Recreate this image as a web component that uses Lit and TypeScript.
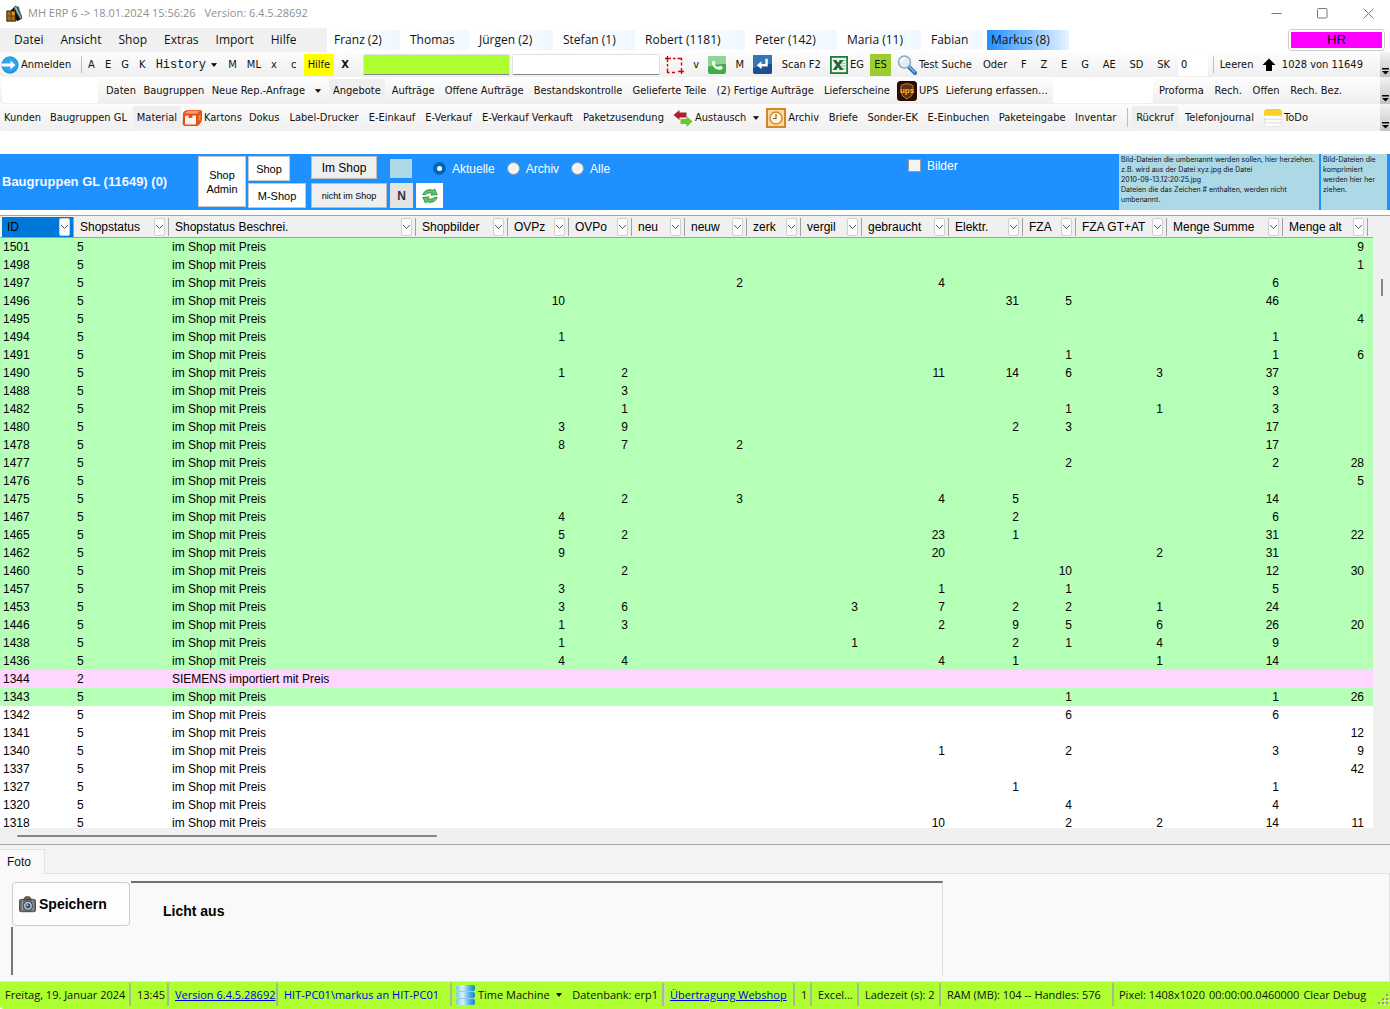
import { LitElement, html, svg, css, nothing, TemplateResult } from "lit";
import { customElement, state } from "lit/decorators.js";
import { classMap } from "lit/directives/class-map.js";

/* ---------- icons ---------- */

const caret = html`<svg class="caret" width="7" height="4" viewBox="0 0 7 4" aria-hidden="true"><path d="M0.5 0.5h5L3 3.5z" fill="#000" stroke="#000" stroke-width="0.6" /></svg>`;

const icon = (size: number, body: TemplateResult | TemplateResult[]) =>
  html`<svg class="ico" width=${size} height=${size} viewBox="0 0 20 20" aria-hidden="true">${body}</svg>`;

const icons = {
  app: icon(17, svg`
    <path d="M5 7 L11 1 L18 12 L19 16 L13 19z" fill="#111" />
    <path d="M11 1l4 1 4 13-2 2L9 5z" fill="#35605e" />
    <path d="M10 3l2-1 6 13-1 1z" fill="#9cb8b4" />
    <rect x="1" y="7" width="10" height="12" fill="#a86e10" stroke="#1b1205" />
    <path d="M1 13h10M6 7v12" stroke="#5d3b04" stroke-width="1" />
    <rect x="7" y="8" width="3" height="4" fill="#d89a2a" />`),
  login: icon(18, svg`
    <circle cx="10" cy="10" r="9.6" fill="#1c8fdc" />
    <circle cx="10" cy="9.6" r="8.2" fill="#2ea5ea" />
    <path d="M0.500 8.400h10V5l5.500 5-5.500 5v-3.400H0.500z" fill="#fff" />`),
  crop: icon(20, svg`
    <g stroke="#d40000" stroke-width="1.4" fill="none">
      <path d="M1 3.500h6M3.500 1v6" />
      <path d="M9 3.500h2.500M13.500 3.500h4v2" />
      <path d="M3.500 9v2.500M3.500 13.500v4h2M17.500 7.500v3M8 17.500h3M17.500 13v6M14 16.500h6" />
    </g>`),
  phone: icon(18, svg`
    <rect width="20" height="20" rx="2.500" fill="#3fae49" />
    <path d="M0 2.500Q0 0 2.500 0h15Q20 0 20 2.500V9Q10 8 0 12z" fill="#8fd695" />
    <path d="M4.500 6.500Q6 4.500 7.500 6l.8 2.200L7.200 9.800Q9.500 12.500 11.800 12l1.600-1.300 2.600 1.200q1.200 1.500-.8 3-6 1.600-9.500-3.400-2-2.800-1.200-5z" fill="#fff" />`),
  enter: icon(19, svg`
    <rect width="20" height="20" rx="1.500" fill="#1a4f8f" />
    <path d="M0 1.500Q0 0 1.500 0h17Q20 0 20 1.500V9Q10 10 0 14z" fill="#3577b5" />
    <path d="M15.500 4v8.200H9V15l-5-4.200 5-4.300v3h4V4z" fill="#fff" />`),
  excel: icon(18, svg`
    <rect x="1" y="1" width="18" height="18" fill="#eef5ee" stroke="#217a3c" stroke-width="2" />
    <path d="M12 5h5M12 8h5M12 11h5M12 14h5" stroke="#7db58a" />
    <path d="M3 4.500h4l2 3 2-3h4L11 10l4 5.500h-4l-2-3-2 3H3L7 10z" fill="#1d6b33" />`),
  search: icon(20, svg`
    <path d="M12 12l6 6" stroke="#2e75b8" stroke-width="4" stroke-linecap="round" />
    <path d="M12.500 12l5 5" stroke="#8cbde6" stroke-width="1.200" stroke-linecap="round" />
    <circle cx="7.500" cy="7" r="6" fill="#dceefb" stroke="#93a9c4" stroke-width="1.600" />
    <path d="M4 6.500a3.800 3.800 0 0 1 4-3" stroke="#fff" stroke-width="1.800" fill="none" />`),
  up: html`<svg class="ico" width="14" height="14" viewBox="0 0 14 14" aria-hidden="true"><path d="M7 0.500l6.500 6.500H10v6H4V7H0.500z" fill="#000" /></svg>`,
  ups: icon(20, svg`
    <rect width="20" height="20" rx="3.500" fill="#2c0b04" />
    <path d="M4 4.500Q10 1 16 4.500V11q0 4-6 7-6-3-6-7z" fill="#5e2f10" stroke="#c98a3a" stroke-width="0.900" />
    <text x="10" y="12" text-anchor="middle" font-family="Liberation Sans, sans-serif" font-weight="700" font-size="8" fill="#f5b63f">ups</text>`),
  box: icon(20, svg`
    <path d="M1 5.500Q2 2 6 2h12q2 0 2 2v7q0 3-3 6l-1.500 1H3Q1 18 0.700 16z" fill="#e8500f" />
    <path d="M2 5.500L6 2.800h12l-3 3z" fill="#f79b75" />
    <rect x="3" y="7.500" width="11" height="9" rx="1" fill="#fff4ee" />
    <path d="M6.500 7h4v3h-4z" fill="#e8500f" />
    <path d="M16.500 8l2-2.500v5.500l-2 2.500z" fill="#f58256" />`),
  swap: icon(20, svg`
    <path d="M0.500 7L6.500 2v2.500h7v5h-7V12z" fill="#b0202a" />
    <path d="M19.500 13.500L13.500 8v3h-6v5h6v3z" fill="#6cc42f" />`),
  clock: icon(20, svg`
    <rect x="1" y="1" width="18" height="18" fill="#fbdc9c" stroke="#d0872b" stroke-width="2" />
    <circle cx="10" cy="10" r="6" fill="#fff6dd" stroke="#cf8a34" stroke-width="1.500" />
    <path d="M10 6v4.500H7" stroke="#8c5a18" fill="none" stroke-width="1.200" />`),
  note: icon(18, svg`
    <rect x="0.500" y="0.500" width="19" height="19" rx="3" fill="#fdfdfd" stroke="#e4e4e4" />
    <path d="M0 7.500V4Q0 0 4 0h12q4 0 4 4v3.500z" fill="#f9cf2a" />
    <path d="M0.500 11.500h19M0.500 15.500h19" stroke="#d9d9d9" />`),
  refresh: icon(18, svg`
    <g fill="#5cc860" stroke="#1c8a35" stroke-width="0.900" stroke-linejoin="round">
      <path d="M2 8.500Q4 3 10 3q2 0 3.500.8L15 2l3 6.500-7 .5 1.500-2Q7.500 5.500 5 8.500z" />
      <path d="M18 11.500Q16 17 10 17q-2 0-3.500-.8L5 18l-3-6.500 7-.5-1.500 2q5 1.500 7.500-1.500z" />
    </g>`),
  camera: icon(17, svg`
    <path d="M5.500 4l2-3h5l2 3z" fill="#777" stroke="#333" />
    <rect x="0.500" y="4" width="19" height="14.500" rx="2" fill="#6d6d6d" stroke="#3b3b3b" />
    <path d="M4 5v13M16.500 5v13" stroke="#a5a5a5" />
    <circle cx="10.500" cy="11.500" r="5.200" fill="#c9ced3" stroke="#333" />
    <circle cx="10.500" cy="11.500" r="3" fill="#27507f" />
    <circle cx="9.800" cy="10.800" r="1.200" fill="#a9d2f5" />`),
  database: html`<svg class="ico" width="19" height="20" viewBox="0 0 19 20" aria-hidden="true">
    <defs><linearGradient id="drum"><stop offset="0" stop-color="#7cc8ee" /><stop offset="0.350" stop-color="#d8f2fc" /><stop offset="0.700" stop-color="#4fb4ea" /><stop offset="1" stop-color="#1c7ec8" /></linearGradient></defs>
    <g fill="url(#drum)"><rect width="19" height="6" rx="2" /><rect y="7" width="19" height="6" rx="2" /><rect y="14" width="19" height="6" rx="2" /></g>
    <path d="M1 6.500h17M1 13.500h17" stroke="#8fcdec" /></svg>`,
};

/* ---------- data ---------- */

const users: [string, number?][] = [
  ["Franz", 2], ["Thomas"], ["Jürgen", 2], ["Stefan", 1], ["Robert", 1181],
  ["Peter", 142], ["Maria", 11], ["Fabian"], ["Markus", 8],
];

interface Column { key: string; label: string; width: number; text?: boolean }

const columns: Column[] = [
  { key: "id", label: "ID", width: 74, text: true },
  { key: "st", label: "Shopstatus", width: 95, text: true },
  { key: "tx", label: "Shopstatus Beschrei.", width: 247, text: true },
  { key: "bi", label: "Shopbilder", width: 92 },
  { key: "z", label: "OVPz", width: 61 },
  { key: "o", label: "OVPo", width: 63 },
  { key: "n", label: "neu", width: 53 },
  { key: "w", label: "neuw", width: 62 },
  { key: "k", label: "zerk", width: 54 },
  { key: "v", label: "vergil", width: 61 },
  { key: "g", label: "gebraucht", width: 87 },
  { key: "e", label: "Elektr.", width: 74 },
  { key: "f", label: "FZA", width: 53 },
  { key: "t", label: "FZA GT+AT", width: 91 },
  { key: "s", label: "Menge Summe", width: 116 },
  { key: "a", label: "Menge alt", width: 85 },
];

type Row = Record<string, number | string>;
const SHOP = { st: 5, tx: "im Shop mit Preis", tone: "green" };
const PLAIN = { ...SHOP, tone: "plain" };

const rows: Row[] = [
  { id: 1501, ...SHOP, a: 9 },
  { id: 1498, ...SHOP, a: 1 },
  { id: 1497, ...SHOP, w: 2, g: 4, s: 6 },
  { id: 1496, ...SHOP, z: 10, e: 31, f: 5, s: 46 },
  { id: 1495, ...SHOP, a: 4 },
  { id: 1494, ...SHOP, z: 1, s: 1 },
  { id: 1491, ...SHOP, f: 1, s: 1, a: 6 },
  { id: 1490, ...SHOP, z: 1, o: 2, g: 11, e: 14, f: 6, t: 3, s: 37 },
  { id: 1488, ...SHOP, o: 3, s: 3 },
  { id: 1482, ...SHOP, o: 1, f: 1, t: 1, s: 3 },
  { id: 1480, ...SHOP, z: 3, o: 9, e: 2, f: 3, s: 17 },
  { id: 1478, ...SHOP, z: 8, o: 7, w: 2, s: 17 },
  { id: 1477, ...SHOP, f: 2, s: 2, a: 28 },
  { id: 1476, ...SHOP, a: 5 },
  { id: 1475, ...SHOP, o: 2, w: 3, g: 4, e: 5, s: 14 },
  { id: 1467, ...SHOP, z: 4, e: 2, s: 6 },
  { id: 1465, ...SHOP, z: 5, o: 2, g: 23, e: 1, s: 31, a: 22 },
  { id: 1462, ...SHOP, z: 9, g: 20, t: 2, s: 31 },
  { id: 1460, ...SHOP, o: 2, f: 10, s: 12, a: 30 },
  { id: 1457, ...SHOP, z: 3, g: 1, f: 1, s: 5 },
  { id: 1453, ...SHOP, z: 3, o: 6, v: 3, g: 7, e: 2, f: 2, t: 1, s: 24 },
  { id: 1446, ...SHOP, z: 1, o: 3, g: 2, e: 9, f: 5, t: 6, s: 26, a: 20 },
  { id: 1438, ...SHOP, z: 1, v: 1, e: 2, f: 1, t: 4, s: 9 },
  { id: 1436, ...SHOP, z: 4, o: 4, g: 4, e: 1, t: 1, s: 14 },
  { id: 1344, st: 2, tx: "SIEMENS importiert mit Preis", tone: "pink" },
  { id: 1343, ...SHOP, f: 1, s: 1, a: 26 },
  { id: 1342, ...PLAIN, f: 6, s: 6 },
  { id: 1341, ...PLAIN, a: 12 },
  { id: 1340, ...PLAIN, g: 1, f: 2, s: 3, a: 9 },
  { id: 1337, ...PLAIN, a: 42 },
  { id: 1327, ...PLAIN, e: 1, s: 1 },
  { id: 1320, ...PLAIN, f: 4, s: 4 },
  { id: 1318, ...PLAIN, g: 10, f: 2, t: 2, s: 14, a: 11 },
];

/* ---------- tool bars ---------- */

@customElement("tool-bars")
export class ToolBars extends LitElement {
  static styles = css`
    :host { display: block; font: 11px/14px "DejaVu Sans Condensed", "DejaVu Sans", sans-serif; color: #111; }
    .bar { display: grid; background: linear-gradient(#fdfdfd, #efefef); height: 27px; border-bottom-left-radius: 3px; overflow: hidden; }
    .first { grid-template-columns: 82px 273px 7px 149px 150px 2px 309px 204px 34px 156px 1fr 10px; height: 25px; }
    .second { grid-template-columns: 100px 228px 723px 104px 190px 1fr 10px; }
    .third { grid-template-columns: 181px 486px 459px 185px 1fr 10px; }
    .group { display: flex; align-items: center; justify-content: space-between; min-width: 0; padding-left: 1px; }
    .rule { align-self: stretch; border-left: 1px solid #bdbdbd; margin: 4px 0; }
    .inset { padding: 0 3px; }
    .flags { padding: 0 3px 0 8px; }
    button { display: flex; align-items: center; gap: 2px; font: inherit; color: inherit; background: none; border: 0; padding: 0 3px; height: 100%; white-space: nowrap; }
    .icon-only { padding: 0; }
    .mono { font: 12px/14px "Liberation Mono", monospace; gap: 5px; }
    .split { gap: 10px; }
    .help { background: #ff0; height: 22px; padding: 0 4px; }
    .es { background: #9acd32; height: 22px; padding: 0 4px; }
    .strong { font-weight: 700; }
    .lit { background: #efefef; height: 23px; padding: 0 4px; }
    .ico, .caret { flex: none; display: block; }
    input { font: inherit; min-width: 0; box-sizing: border-box; border: 1px solid #e2e2e2; border-bottom: 1px solid #858585; border-radius: 2px; background: #fff; padding: 0 3px; margin: 2px 1px; }
    .scan { background: #adff2f; }
    .bare { border: 0; margin: 1px 2px; }
    .more { grid-column: -2; align-self: stretch; justify-content: center; align-items: flex-end; padding: 0 0 2px; background: linear-gradient(#f2f2f2, #c4c4c4); }
  `;

  private item(label: string, cls = "", ico?: unknown, drop = false) {
    return html`<button class=${cls}>${ico ?? nothing}${label}${drop ? caret : nothing}</button>`;
  }

  private more() {
    return html`<button class="more" aria-label="Weitere"><svg width="7" height="7" viewBox="0 0 7 7"><path d="M0 0h7v1.500H0z" fill="#000" /><path d="M0 3h7L3.500 6.500z" fill="#000" /></svg></button>`;
  }

  render() {
    const i = this.item;
    return html`
      <div class="bar first">
        <div class="group"><button class="icon-only">${icons.login}Anmelden</button><span class="rule"></span></div>
        <div class="group inset">
          ${["A", "E", "G", "K"].map((t) => i(t))}
          ${i("History", "mono", undefined, true)}
          ${i("M")}${i("ML")}${i("x")}<span></span>${i("c")}
          ${i("Hilfe", "help")}${i("X", "strong")}
        </div>
        <span></span>
        <input class="scan" aria-label="Scanfeld" />
        <input aria-label="Suchfeld" />
        <span></span>
        <div class="group">
          <button class="icon-only" aria-label="Ausschnitt">${icons.crop}</button>
          ${i("v")}
          <button class="icon-only" aria-label="Anrufen">${icons.phone}</button>
          ${i("M")}
          <button class="icon-only" aria-label="Eingabe">${icons.enter}</button>
          ${i("Scan F2")}
          ${i("EG", "icon-only", icons.excel)}
          ${i("ES", "es")}
          ${i("Test Suche", "icon-only", icons.search)}
        </div>
        <div class="group flags">${["Oder", "F", "Z", "E", "G", "AE", "SD", "SK"].map((t) => i(t))}</div>
        <input class="bare" aria-label="Anzahl" value="0" />
        <div class="group inset"><span class="rule"></span>${i("Leeren")}<button aria-label="Nach oben">${icons.up}</button>${i("1028 von 11649", "icon-only")}</div>
        ${this.more()}
      </div>

      <div class="bar second">
        <input class="bare" aria-label="Filter" />
        <div class="group inset">${i("Daten")}${i("Baugruppen")}${i("Neue Rep.-Anfrage", "split", undefined, true)}</div>
        <div class="group">
          ${i("Angebote", "lit")}${i("Aufträge")}${i("Offene Aufträge")}${i("Bestandskontrolle")}
          ${i("Gelieferte Teile")}${i("(2) Fertige Aufträge")}${i("Lieferscheine")}
          ${i("UPS", "icon-only", icons.ups)}${i("Lieferung erfassen…")}
        </div>
        <input class="bare" aria-label="Rechnungsfilter" />
        <div class="group">${i("Proforma")}${i("Rech.")}${i("Offen")}${i("Rech. Bez.")}</div>
        ${this.more()}
      </div>

      <div class="bar third">
        <div class="group">${i("Kunden")}${i("Baugruppen GL")}${i("Material", "lit")}</div>
        <div class="group">
          ${i("Kartons", "icon-only", icons.box)}${i("Dokus")}${i("Label-Drucker")}${i("E-Einkauf")}
          ${i("E-Verkauf")}${i("E-Verkauf Verkauft")}${i("Paketzusendung")}
        </div>
        <div class="group inset">
          ${i("Austausch", "", icons.swap)}${caret}${i("Archiv", "", icons.clock)}${i("Briefe")}
          ${i("Sonder-EK")}${i("E-Einbuchen")}${i("Paketeingabe")}${i("Inventar")}<span></span>
        </div>
        <div class="group"><span class="rule"></span>${i("Rückruf", "lit")}${i("Telefonjournal")}${i("ToDo", "", icons.note)}</div>
        ${this.more()}
      </div>`;
  }
}

/* ---------- filter panel ---------- */

@customElement("filter-panel")
export class FilterPanel extends LitElement {
  static styles = css`
    :host { display: grid; grid-template-columns: 196px 48px 61px 77px 1fr 209px 200px 66px 1px; column-gap: 2px; background: #1e90ff; height: 56px; color: #fff; font: 12px/14px "Liberation Sans", Arial, sans-serif; }
    h1 { font-size: 13px; line-height: 16px; margin: auto 0 auto 2px; white-space: nowrap; color: #f4f8ff; }
    button { font: 11px/14px "Liberation Sans", Arial, sans-serif; color: #000; background: #fff; border: 1px solid #c8c8c8; padding: 0; min-width: 0; }
    .tall { margin: 2px 0 3px; }
    .pair { display: grid; grid-template-rows: 25px 25px; row-gap: 2px; padding: 2px 0; justify-items: start; }
    .shop { width: 42px; }
    .wide { width: 58px; }
    .grey { background: #efefef; border-color: #bdbdbd; }
    .large { font-size: 12px; width: 66px; height: 23px; }
    .small { font-size: 9px; width: 76px; }
    .line { display: flex; align-items: center; gap: 3px; }
    .swatch { background: #add8e6; width: 22px; height: 19px; margin-right: 18px; }
    .flat { border: 0; background: #e3e3e3; font-weight: 700; font-size: 12px; color: #333; width: 23px; height: 25px; }
    .fresh { border: 0; width: 27px; height: 25px; display: grid; place-items: center; }
    label { display: flex; gap: 6px; align-items: center; margin-right: 9px; }
    input { appearance: none; margin: 0; width: 13px; height: 13px; background: #f3f3f3; border: 1px solid #9a9a9a; box-sizing: border-box; }
    input[type="radio"] { border-radius: 50%; }
    input[type="radio"]:checked { border: 4px solid #0067b8; background: #fff; }
    .pictures { padding-top: 5px; align-items: flex-start; }
    .drop { background: #add8e6; color: #111; font: 7px/10px "Inter", "Liberation Sans", sans-serif; padding: 1px 2px; margin: 0; white-space: pre-line; }
  `;

  private modes = ["Aktuelle", "Archiv", "Alle"];
  @state() private mode = "Aktuelle";

  render() {
    return html`
      <h1>Baugruppen GL (11649) (0)</h1>
      <button class="tall">Shop<br />Admin</button>
      <div class="pair"><button class="shop">Shop</button><button class="wide">M-Shop</button></div>
      <div class="pair"><button class="grey large">Im Shop</button><button class="grey small">nicht im Shop</button></div>
      <div class="pair">
        <div class="line">
          <span class="swatch"></span>
          ${this.modes.map((m) => html`<label><input type="radio" name="mode" .checked=${this.mode === m} @change=${() => (this.mode = m)} />${m}</label>`)}
        </div>
        <div class="line">
          <button class="flat">N</button>
          <button class="fresh" aria-label="Aktualisieren">${icons.refresh}</button>
        </div>
      </div>
      <label class="pictures"><input type="checkbox" />Bilder</label>
      <p class="drop">Bild-Dateien die umbenannt werden sollen, hier herziehen.
z.B. wird aus der Datei xyz.jpg die Datei
2010-09-13.12:20:25.jpg
Dateien die das Zeichen # enthalten, werden nicht umbenannt.</p>
      <p class="drop">Bild-Dateien die komprimiert werden hier her ziehen.</p>`;
  }
}

/* ---------- data grid ---------- */

@customElement("stock-grid")
export class StockGrid extends LitElement {
  static styles = css`
    :host { display: grid; grid-template: minmax(0, 1fr) 16px / minmax(0, 1fr) 17px; background: #f0f0f0; border-top: 1px solid #a0a0a0; border-bottom: 1px solid #a5a8b0; font: 12px/18px "Liberation Sans", Arial, sans-serif; color: #000; overflow: hidden; }
    .view { overflow: hidden; background: #fff; }
    table { border-collapse: separate; border-spacing: 0; table-layout: fixed; width: 100%; }
    th { padding: 0; height: 21px; font-weight: 400; background: #f0f0f0; border-bottom: 1px solid #a0a0a0; }
    .head { display: flex; align-items: center; justify-content: space-between; padding: 0 3px 0 6px; margin: 2px 0 1px; height: 18px; border-right: 1px solid #a0a0a0; white-space: nowrap; }
    .active .head { background: #0078d7; margin: 1px 0 0 2px; height: 20px; padding-left: 5px; }
    .head button { flex: none; width: 11px; height: 18px; padding: 0; border: 1px solid #d0d0d0; border-radius: 2px; background: #fdfdfd; display: grid; place-items: center; }
    td { padding: 0 4px 0 3px; height: 18px; text-align: right; white-space: nowrap; }
    .text { text-align: left; }
    .green { background: #b6ffb6; }
    .pink { background: #ffd6ff; }
    .vertical { padding: 63px 0 0 8px; }
    .vertical span { display: block; width: 2px; height: 17px; background: #858585; }
    .horizontal { padding: 7px 0 0 17px; }
    .horizontal span { display: block; width: 31%; height: 2px; border-radius: 1px; background: #858585; }
  `;

  render() {
    return html`
      <div class="view">
        <table>
          <colgroup>${columns.map((c) => html`<col style="width:${c.width}px" />`)}<col /></colgroup>
          <thead>
            <tr>${columns.map((c, n) => html`<th scope="col" class=${classMap({ active: n === 0 })}>
              <div class="head">${c.label}<button aria-label="Filter ${c.label}"><svg width="9" height="6" viewBox="0 0 9 6"><path d="M1 1l3.500 3.500L8 1" fill="none" stroke="#555" /></svg></button></div></th>`)}<th></th></tr>
          </thead>
          <tbody>
            ${rows.map((r) => html`<tr class=${r.tone}>${columns.map((c) => html`<td class=${classMap({ text: !!c.text })}>${r[c.key] ?? nothing}</td>`)}<td></td></tr>`)}
          </tbody>
        </table>
      </div>
      <div class="vertical"><span></span></div>
      <div class="horizontal"><span></span></div>`;
  }
}

/* ---------- page ---------- */

@customElement("app-root")
export class AppRoot extends LitElement {
  static styles = css`
    :host { display: flex; flex-direction: column; height: 100vh; background: #fff; overflow: hidden; font: 12px/16px "Open Sans", "Noto Sans", sans-serif; color: #111; }
    button { font: inherit; color: inherit; background: none; border: 0; padding: 0; white-space: nowrap; }
    .title { display: flex; align-items: center; height: 26px; padding: 0 16px 2px 6px; gap: 5px; font-size: 11px; color: #909090; flex: none; }
    .version { margin-left: 4px; flex: 1; }
    .window { display: flex; gap: 35px; }
    .window svg, .ico, .caret { display: block; flex: none; }
    .menu { display: flex; height: 24px; flex: none; background: linear-gradient(90deg, #f0f0f0 20%, #fdfdfd 60%); }
    nav { display: flex; gap: 17px; padding-left: 14px; width: 313px; }
    .users { display: grid; grid-template-columns: 73px 69px 84px 82px 110px 92px 84px 62px 86px; padding: 2px 0; flex: 1; background: #fff; }
    .users button { text-align: left; padding-left: 10px; background: linear-gradient(90deg, #fff, #f0f8ff); }
    .users button:first-child { padding-left: 7px; }
    .users .me { margin-left: 4px; padding-left: 4px; background: linear-gradient(90deg, #1e90ff, #e8f3ff); }
    .hr { align-self: center; width: 97px; height: 22px; margin-right: 5px; border: 1px solid #ccc; border-radius: 4px; padding: 2px; background: #fff; }
    .hr span { display: block; background: #f0f; line-height: 16px; font-family: "Liberation Sans", sans-serif; font-size: 13px; }
    filter-panel { margin: 23px 0 5px; flex: none; }
    tool-bars { flex: none; }
    stock-grid { flex: 1; min-height: 0; }
    .tabs { display: flex; height: 24px; padding-top: 4px; flex: none; background: #f4f4f4; border-bottom: 1px solid #e2e2e2; }
    .tab { background: #f9f9f9; border: 1px solid #e2e2e2; border-bottom: 0; border-left: 0; width: 45px; height: 25px; font: 12px/16px "Liberation Sans", sans-serif; padding-right: 6px; }
    .photo { display: grid; grid-template-columns: 119px 812px; padding: 7px 0 6px 12px; height: 94px; flex: none; background: #f9f9f9; border-right: 1px solid #e2e2e2; border-bottom: 1px solid #e2e2e2; font: bold 14px/18px "Liberation Sans", sans-serif; color: #000; }
    .side { display: flex; flex-direction: column; }
    .save { display: flex; align-items: center; gap: 3px; height: 44px; margin-top: 1px; margin-right: 1px; padding-left: 6px; border: 1px solid #ccc; border-radius: 4px; background: #fdfdfd; }
    .edge { flex: 1; margin-top: 1px; border-left: 2px solid #777; margin-left: -1px; }
    .light { border-top: 2px solid #707070; border-right: 1px solid #dcdcdc; padding: 19px 32px 0; }
    footer { display: grid; grid-template-columns: 131px 38px 109px 174px 212px 131px 17px 47px 82px 173px 1fr; flex: none; height: 27px; background: #adff2f; font-size: 11px; border-bottom-left-radius: 4px; }
    .cell { display: flex; align-items: center; gap: 4px; padding-left: 6px; margin: 1px 0 3px; border-right: 2px solid #a8b890; white-space: nowrap; overflow: hidden; }
    .cell:first-child { padding-left: 5px; }
    .cell:last-child { border: 0; padding-left: 5px; }
    .double { border-left: 2px solid #c9dba8; padding-left: 4px; }
    .cell a, .blue { color: #0000e6; }
    .machine { padding-left: 4px; gap: 3px; }
    .machine button { display: flex; align-items: center; gap: 3px; }
    .db { margin-left: auto; padding-right: 4px; }
    .grip { margin-left: auto; align-self: flex-end; }
  `;

  render() {
    return html`
      <header class="title">
        ${icons.app}<span>MH ERP 6 -&gt; 18.01.2024 15:56:26</span><span class="version">Version: 6.4.5.28692</span>
        <span class="window">
          <button aria-label="Minimieren"><svg width="11" height="11" viewBox="0 0 11 11"><path d="M0.500 5.500h10" stroke="#777" /></svg></button>
          <button aria-label="Maximieren"><svg width="11" height="11" viewBox="0 0 11 11"><rect x="0.500" y="0.500" width="9.500" height="9.500" rx="1" fill="none" stroke="#777" /></svg></button>
          <button aria-label="Schließen"><svg width="11" height="11" viewBox="0 0 11 11"><path d="M0.500 0.500l10 10M10.500 0.500l-10 10" stroke="#777" /></svg></button>
        </span>
      </header>
      <div class="menu">
        <nav>${["Datei", "Ansicht", "Shop", "Extras", "Import", "Hilfe"].map((m) => html`<button>${m}</button>`)}</nav>
        <div class="users">
          ${users.map(([name, count]) => html`<button class=${classMap({ me: name === "Markus" })}>${name}${count === undefined ? nothing : ` (${count})`}</button>`)}
        </div>
        <button class="hr"><span>HR</span></button>
      </div>
      <tool-bars></tool-bars>
      <filter-panel></filter-panel>
      <stock-grid></stock-grid>
      <div class="tabs"><button class="tab">Foto</button></div>
      <section class="photo">
        <div class="side"><button class="save">${icons.camera}Speichern</button><div class="edge"></div></div>
        <div class="light">Licht aus</div>
      </section>
      <footer>
        <span class="cell">Freitag, 19. Januar 2024</span>
        <span class="cell">13:45</span>
        <span class="cell"><a href="#version">Version 6.4.5.28692</a></span>
        <span class="cell blue">HIT-PC01\\markus an HIT-PC01</span>
        <span class="cell machine"><button>${icons.database}Time Machine&nbsp;${caret}</button><span class="db">Datenbank: erp1</span></span>
        <span class="cell double"><a href="#webshop">Übertragung Webshop</a></span>
        <span class="cell">1</span>
        <span class="cell">Excel...</span>
        <span class="cell">Ladezeit (s): 2</span>
        <span class="cell">RAM (MB): 104 -- Handles: 576</span>
        <span class="cell"><span>Pixel: 1408x1020</span><span>00:00:00.0460000</span><span>Clear Debug</span>
          <svg class="grip" width="12" height="12" viewBox="0 0 12 12"><g fill="#8f9a80"><path d="M8 0h2v2H8zM4 4h2v2H4zM8 4h2v2H8zM0 8h2v2H0zM4 8h2v2H4zM8 8h2v2H8z" /></g><g fill="#fff"><path d="M10 2h1v1h-1zM6 6h1v1H6zM10 6h1v1h-1zM2 10h1v1H2zM6 10h1v1H6zM10 10h1v1h-1z" /></g></svg>
        </span>
      </footer>`;
  }
}
